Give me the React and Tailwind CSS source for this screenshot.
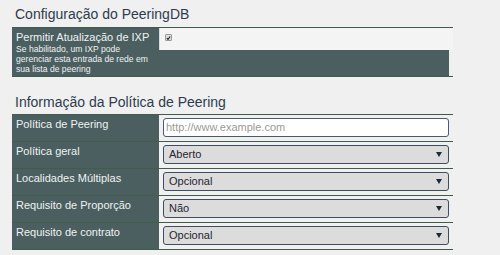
import React from "react";

const font = { fontFamily: '"Liberation Sans", Arial, sans-serif' };

function Arrow() {
  return (
    <svg width="6" height="5" viewBox="0 0 6 5" className="shrink-0">
      <path d="M0 0 L6 0 L3 5 Z" fill="#1e2a38" />
    </svg>
  );
}

function Select({ value }) {
  return (
    <div className="mt-[3px] ml-[4px] mr-[4px] h-[19px] flex items-center justify-between rounded-[3px] border border-[#3f4d63] bg-[#dcdcdc] pl-[5px] pr-[6px] text-[11px] text-[#1f2630]">
      <span>{value}</span>
      <Arrow />
    </div>
  );
}

function Row({ label, children }) {
  return (
    <div className="flex h-[27px] border-b border-[#3f5d4a]">
      <div className="w-[147px] shrink-0 bg-[#4b5f60] pl-[4px] pt-[2px] text-[11px] leading-[14px] text-[#eef2f2]">
        {label}
      </div>
      <div className="flex-1">{children}</div>
    </div>
  );
}

export default function App() {
  return (
    <div className="w-[500px] h-[255px] bg-[#f0f0f0] overflow-hidden" style={font}>
      <div className="pl-[12px] w-[453px]">
        <div className="pt-[5px] pl-[3px] text-[14px] leading-[18px] text-[#2d3c4e]">
          Configuração do PeeringDB
        </div>
        <div className="mt-[4px] flex border-t border-b border-[#3f5d4a] h-[50px]">
          <div className="w-[147px] shrink-0 bg-[#4b5f60] pl-[4px] pt-[2px] text-[#eef2f2]">
            <div className="text-[11px] leading-[14px]">Permitir Atualização de IXP</div>
            <div className="text-[8.6px] leading-[10px] whitespace-nowrap">
              Se habilitado, um IXP pode
              <br />
              gerenciar esta entrada de rede em
              <br />
              sua lista de peering
            </div>
          </div>
          <div className="flex-1 flex flex-col bg-[#eef0f0]">
            <div className="h-[22px] bg-[#f4f4f4] border-l border-[#d8dcdc] flex items-start pl-[5px] pt-[6px]">
              <div className="w-[7px] h-[7px] rounded-[1px] border border-[#9a9a9a] bg-[#dedede] flex items-center justify-center">
                <svg width="6" height="6" viewBox="0 0 6 6">
                  <path d="M1 3.2 L2.4 4.6 L5 1.2" stroke="#222" strokeWidth="1.3" fill="none" />
                </svg>
              </div>
            </div>
            <div className="flex-1 mr-[4px] bg-[#4b5f60]" />
          </div>
        </div>

        <div className="mt-[16px] pl-[3px] text-[14px] leading-[18px] text-[#2d3c4e]">
          Informação da Política de Peering
        </div>
        <div className="mt-[3px] border-t border-[#3f5d4a]">
          <Row label="Política de Peering">
            <div className="mt-[3px] ml-[4px] mr-[4px] h-[19px] flex items-center rounded-[3px] border border-[#4a5a72] bg-white pl-[2px] text-[11px] text-[#9a9a9a]">
              http://www.example.com
            </div>
          </Row>
          <Row label="Política geral">
            <Select value="Aberto" />
          </Row>
          <Row label="Localidades Múltiplas">
            <Select value="Opcional" />
          </Row>
          <Row label="Requisito de Proporção">
            <Select value="Não" />
          </Row>
          <Row label="Requisito de contrato">
            <Select value="Opcional" />
          </Row>
        </div>
      </div>
    </div>
  );
}
